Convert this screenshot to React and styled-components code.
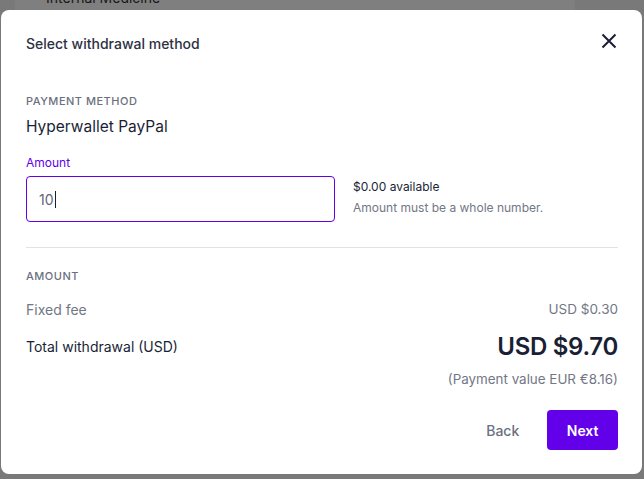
import React from "react";
import styled, { createGlobalStyle } from "styled-components";

const Global = createGlobalStyle`
  html, body { margin: 0; padding: 0; }
  body { font-family: Inter, "Noto Sans", sans-serif; -webkit-font-smoothing: antialiased; }
  * { box-sizing: border-box; }
`;

const Page = styled.div`
  position: relative;
  width: 644px;
  height: 479px;
  overflow: hidden;
  background: #f3f3f3;
`;

const BehindCard = styled.div`
  margin-left: 15px;
  width: 560px;
  height: 60px;
  background: #fff;
  display: flex;
  align-items: flex-start;
  padding-left: 31px;
  margin-top: -9px;
`;

const BehindText = styled.span`
  font-size: 14px;
  line-height: 14px;
  color: #333;
`;

const Overlay = styled.div`
  position: absolute;
  inset: 0;
  background: rgba(0, 0, 0, 0.5);
  padding: 10px 2px 5px 1px;
  display: flex;
`;

const Modal = styled.div`
  flex: 1;
  background: #fff;
  border-radius: 8px;
  display: flex;
  flex-direction: column;
  padding: 0 24px 24px 25px;
`;

const Header = styled.div`
  height: 66px;
  display: flex;
  align-items: center;
  justify-content: space-between;
`;

const Title = styled.h2`
  margin: 0;
  font-size: 14px;
  font-weight: 500;
  color: #2d3142;
`;

const CloseButton = styled.button`
  border: none;
  background: none;
  padding: 0;
  margin: 0 -1px 5px 0;
  width: 20px;
  height: 20px;
  display: flex;
  align-items: center;
  justify-content: center;
  cursor: pointer;
`;

const Body = styled.div`
  padding-top: 17px;
  display: flex;
  flex-direction: column;
`;

const SectionLabel = styled.div`
  font-size: 11px;
  line-height: 16px;
  font-weight: 500;
  letter-spacing: 0.5px;
  text-transform: uppercase;
  color: #6b7080;
`;

const MethodName = styled.div`
  margin-top: 6px;
  font-size: 15.5px;
  line-height: 24px;
  color: #1a1f36;
`;

const FieldLabel = styled.label`
  margin-top: 16px;
  font-size: 12px;
  line-height: 16px;
  color: #6200ea;
`;

const FieldRow = styled.div`
  margin-top: 5px;
  display: flex;
  gap: 18px;
`;

const InputBox = styled.div`
  width: 309px;
  height: 46px;
  border: 1px solid #6200ea;
  border-radius: 4px;
  display: flex;
  align-items: center;
  padding-left: 12px;
  font-size: 14px;
  color: #62677a;
`;

const Caret = styled.span`
  display: inline-block;
  width: 1px;
  height: 17px;
  background: #1a1f36;
  margin-left: 1px;
`;

const Info = styled.div`
  padding-top: 3px;
  display: flex;
  flex-direction: column;
  gap: 5px;
`;

const InfoLine = styled.div`
  font-size: 12px;
  line-height: 16px;
  color: ${(p) => (p.$muted ? "#727785" : "#1a1f36")};
`;

const Divider = styled.hr`
  margin: 25px 0 20px;
  border: none;
  border-top: 1px solid #e2e2e6;
  height: 0;
`;

const Row = styled.div`
  display: flex;
  justify-content: space-between;
  align-items: center;
  margin-top: ${(p) => p.$mt || 0}px;
  height: ${(p) => p.$h || 20}px;
`;

const RowLabel = styled.span`
  font-size: 14px;
  color: ${(p) => (p.$muted ? "#727785" : "#1a1f36")};
`;

const RowValue = styled.span`
  font-size: 13.5px;
  color: #727785;
`;

const BigValue = styled.span`
  font-size: 24px;
  font-weight: 600;
  letter-spacing: -0.3px;
  color: #1a1f36;
`;

const Note = styled.div`
  margin-top: 6px;
  text-align: right;
  font-size: 13.4px;
  line-height: 18px;
  color: #727785;
`;

const Footer = styled.div`
  margin-top: 22px;
  display: flex;
  justify-content: flex-end;
  gap: 12px;
`;

const Button = styled.button`
  height: 40px;
  padding: 0 ${(p) => (p.$primary ? 19.5 : 16)}px;
  border: none;
  border-radius: 4px;
  font-family: inherit;
  font-size: 14px;
  font-weight: ${(p) => (p.$primary ? 600 : 500)};
  background: ${(p) => (p.$primary ? "#6200ea" : "transparent")};
  color: ${(p) => (p.$primary ? "#fff" : "#6b7080")};
  cursor: pointer;
`;

export default function App() {
  return (
    <>
      <Global />
      <Page>
        <BehindCard>
          <BehindText>Internal Medicine</BehindText>
        </BehindCard>
        <Overlay>
          <Modal>
            <Header>
              <Title>Select withdrawal method</Title>
              <CloseButton aria-label="Close">
                <svg width="16" height="16" viewBox="0 0 16 16">
                  <path d="M1.5 1.5L14.5 14.5M14.5 1.5L1.5 14.5" stroke="#1a1f36" strokeWidth="2" />
                </svg>
              </CloseButton>
            </Header>
            <Body>
              <SectionLabel>Payment method</SectionLabel>
              <MethodName>Hyperwallet PayPal</MethodName>
              <FieldLabel>Amount</FieldLabel>
              <FieldRow>
                <InputBox>
                  <span>10</span>
                  <Caret />
                </InputBox>
                <Info>
                  <InfoLine>$0.00 available</InfoLine>
                  <InfoLine $muted>Amount must be a whole number.</InfoLine>
                </Info>
              </FieldRow>
              <Divider />
              <SectionLabel>Amount</SectionLabel>
              <Row $mt={15}>
                <RowLabel $muted>Fixed fee</RowLabel>
                <RowValue>USD $0.30</RowValue>
              </Row>
              <Row $mt={9} $h={36}>
                <RowLabel>Total withdrawal (USD)</RowLabel>
                <BigValue>USD $9.70</BigValue>
              </Row>
              <Note>(Payment value EUR €8.16)</Note>
              <Footer>
                <Button>Back</Button>
                <Button $primary>Next</Button>
              </Footer>
            </Body>
          </Modal>
        </Overlay>
      </Page>
    </>
  );
}
